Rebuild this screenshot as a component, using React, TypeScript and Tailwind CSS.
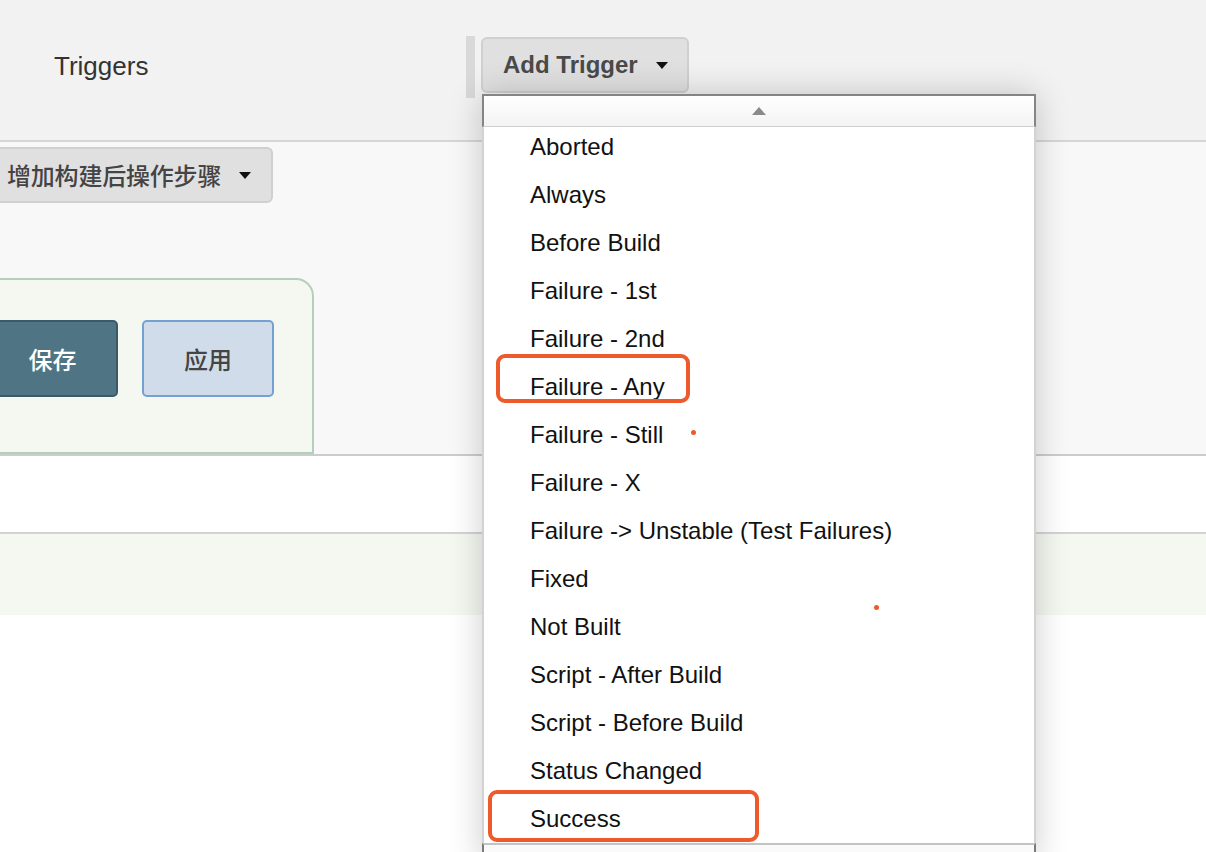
import React from "react";

const items = [
  "Aborted",
  "Always",
  "Before Build",
  "Failure - 1st",
  "Failure - 2nd",
  "Failure - Any",
  "Failure - Still",
  "Failure - X",
  "Failure -> Unstable (Test Failures)",
  "Fixed",
  "Not Built",
  "Script - After Build",
  "Script - Before Build",
  "Status Changed",
  "Success",
];

function Caret({ color = "#111" }: { color?: string }) {
  return (
    <svg width="12" height="7" viewBox="0 0 12 7" className="shrink-0">
      <path d="M0 0 L12 0 L6 7 Z" fill={color} />
    </svg>
  );
}

export default function App() {
  return (
    <div
      className="relative w-[1206px] h-[852px] overflow-hidden bg-white"
      style={{ fontFamily: '"Liberation Sans", "Noto Sans CJK SC", Arial, sans-serif' }}
    >
      {/* Section 1 */}
      <div className="h-[142px] bg-[#f2f2f2] border-b-2 border-[#d6d6d6] flex items-start">
        <div className="w-[466px] pl-[54px] pt-[52px] text-[26px] leading-[28px] text-[#333]">Triggers</div>
        <div className="w-[9px] h-[62px] mt-[36px] bg-[#d9d9d9]" />
        <button className="ml-[6px] mt-[37px] w-[208px] h-[56px] rounded-[6px] border-2 border-[#d0d0d0] bg-[#e0e0e0] flex items-center pl-[20px] gap-[18px]">
          <span className="text-[24px] font-bold text-[#4a4a4a] leading-none">Add Trigger</span>
          <Caret />
        </button>
      </div>

      {/* Section 2 */}
      <div className="h-[314px] bg-[#f8f8f8] border-b-2 border-[#cccccc] flex flex-col items-start">
        <button className="mt-[5px] -ml-[14px] w-[287px] h-[56px] rounded-[6px] border-2 border-[#d0d0d0] bg-[#e0e0e0] flex items-center pl-[19px] gap-[18px]">
          <span
            className="text-[24px] font-medium text-[#444] leading-none tracking-[-0.2px]"
            style={{ fontFamily: '"Noto Sans CJK SC", sans-serif' }}
          >
            增加构建后操作步骤
          </span>
          <Caret />
        </button>
        <div className="mt-[75px] -ml-[60px] w-[374px] h-[176px] rounded-tr-[18px] border-2 border-[#b5cfbf] bg-[#f5f8f1] flex items-start pl-[45px] pt-[40px] gap-[24px]">
          <button
            className="w-[131px] h-[77px] rounded-[5px] border-2 border-[#3b5a68] bg-[#4f7584] text-white text-[24px] font-medium"
            style={{ fontFamily: '"Noto Sans CJK SC", sans-serif' }}
          >
            保存
          </button>
          <button
            className="w-[132px] h-[77px] rounded-[5px] border-2 border-[#74a0d2] bg-[#d0dcea] text-[#444] text-[24px] font-medium"
            style={{ fontFamily: '"Noto Sans CJK SC", sans-serif' }}
          >
            应用
          </button>
        </div>
      </div>

      {/* Section 3 */}
      <div className="h-[78px] bg-white border-b-2 border-[#d3d3d3]" />
      <div className="h-[81px] bg-[#f5f8f1]" />

      {/* Dropdown menu */}
      <div className="absolute left-[482px] top-[94px] w-[554px] shadow-[0_0_32px_rgba(0,0,0,0.2)] bg-white">
        <div className="h-[33px] border-t-2 border-x-2 border-[#858585] border-b border-b-[#cfcfcf] bg-gradient-to-b from-white to-[#f3f3f3] flex items-center justify-center">
          <svg width="14" height="8" viewBox="0 0 14 8">
            <path d="M0 8 L14 8 L7 0 Z" fill="#8a8a8a" />
          </svg>
        </div>
        <div className="h-[716px] overflow-hidden border-x-2 border-[#d2d2d2] bg-white">
          <div className="-mt-[4px]">
            {items.map((t) => (
              <div key={t} className="h-[48px] flex items-center pl-[46px] text-[24px] text-[#111]">
                {t}
              </div>
            ))}
          </div>
        </div>
        <div className="h-[20px] border-t-2 border-t-[#c4c4c4] border-x-2 border-[#7a7a7a] bg-[#fafafa]" />
      </div>

      {/* Annotations */}
      <div className="absolute left-[496px] top-[354px] w-[194px] h-[49px] border-4 border-[#ee5a2b] rounded-[9px]" />
      <div className="absolute left-[488px] top-[790px] w-[271px] h-[52px] border-4 border-[#ee5a2b] rounded-[9px]" />
      <div className="absolute left-[691px] top-[430px] w-[5px] h-[5px] rounded-full bg-[#ee5a2b]" />
      <div className="absolute left-[874px] top-[605px] w-[5px] h-[5px] rounded-full bg-[#ee5a2b]" />
    </div>
  );
}
